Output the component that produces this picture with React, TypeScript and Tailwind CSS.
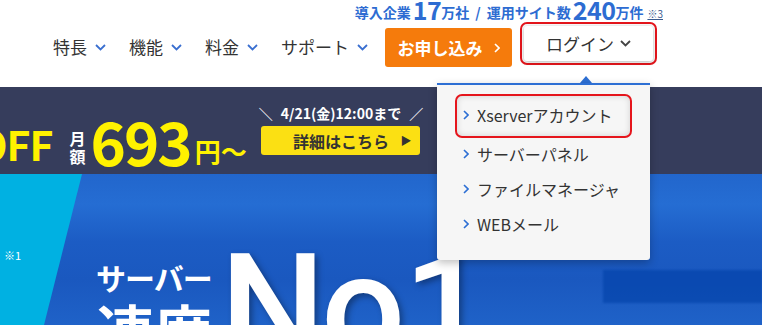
import React from "react";

const Chevron = ({ className = "" }: { className?: string }) => (
  <svg width="11" height="7" viewBox="0 0 11 7" className={className}>
    <polyline points="1,1 5.5,5.5 10,1" fill="none" stroke="currentColor" strokeWidth="1.8" />
  </svg>
);

const RightArrow = ({ className = "" }: { className?: string }) => (
  <svg width="6" height="10" viewBox="0 0 6 10" className={className}>
    <polyline points="1,1 5,5 1,9" fill="none" stroke="currentColor" strokeWidth="1.6" />
  </svg>
);

const navItems = ["特長", "機能", "料金", "サポート"];
const menuItems = ["サーバーパネル", "ファイルマネージャ", "WEBメール"];

export default function App() {
  return (
    <div
      className="relative w-[762px] h-[325px] overflow-hidden bg-white"
      style={{ fontFamily: '"Noto Sans CJK JP", "Noto Sans", sans-serif' }}
    >
      {/* header */}
      <header className="h-[87px] bg-white">
        <div className="flex items-end justify-end pr-[99px] h-[22px] pb-[3px] text-[#2d6cd2] font-bold leading-none">
          <span className="text-[14px]">導入企業</span>
          <span className="text-[25px] ml-[2px] tracking-[-0.5px] leading-[20px]">17</span>
          <span className="text-[14px]">万社</span>
          <span className="text-[14px] mx-[6px]">/</span>
          <span className="text-[14px]">運用サイト数</span>
          <span className="text-[25px] ml-[2px] tracking-[-0.5px] leading-[20px]">240</span>
          <span className="text-[14px]">万件</span>
          <span className="text-[10px] ml-[4px] underline text-[#3a5b8f] font-normal">※3</span>
        </div>
        <div className="flex items-start pl-[53px]">
          <nav className="flex items-center gap-[23px] h-[50px] text-[17px] text-[#333]">
            {navItems.map((n) => (
              <div key={n} className="flex items-center gap-[8px]">
                <span>{n}</span>
                <Chevron className="text-[#3a6fd0]" />
              </div>
            ))}
          </nav>
          <a className="ml-[17px] mt-[6px] flex items-center justify-center gap-[11px] w-[127px] h-[39px] rounded-[3px] bg-[#f57b0c] text-white font-bold text-[17px]">
            お申し込み
            <RightArrow />
          </a>
          <div className="ml-[8px] w-[137px] h-[43px] rounded-[7px] border-2 border-[#e5151c] p-[2px]">
            <div className="flex items-center justify-center gap-[6px] h-full rounded-[3px] bg-white shadow-[0_1px_4px_rgba(0,0,0,0.3)] text-[17px] text-[#333]">
              ログイン
              <Chevron className="text-[#444]" />
            </div>
          </div>
        </div>
      </header>

      {/* campaign banner */}
      <div className="h-[87px] bg-[#363d5c] flex items-center">
        <div className="flex items-end -ml-[24px] mt-[12px] text-[#fff200] font-bold leading-none">
          <span className="text-[41px] tracking-[-1px]">OFF</span>
          <span className="ml-[17px] flex flex-col text-white text-[16px] leading-[18px] mb-[-1px]">
            <span>月</span>
            <span>額</span>
          </span>
          <span className="ml-[5px] text-[60px] tracking-[-2px] mb-[-6px]">693</span>
          <span className="ml-[4px] text-[26px]">円〜</span>
        </div>
        <div className="ml-[12px] flex flex-col items-center">
          <div className="flex items-center gap-[8px] text-white font-bold text-[14px] leading-none">
            <span>＼</span>
            <span>4/21(金)12:00まで</span>
            <span>／</span>
          </div>
          <div className="mt-[6px] relative flex items-center justify-center w-[159px] h-[29px] rounded-[3px] bg-[#fbe013] text-[#333] font-bold text-[16px]">
            詳細はこちら
            <span className="absolute right-[9px] text-[11px]">▶</span>
          </div>
        </div>
      </div>

      {/* hero */}
      <div className="relative h-[151px] overflow-hidden bg-[linear-gradient(180deg,#2266cc_0%,#256dd3_20%,#1c5cc4_45%,#1a58bf_70%,#1f62c8_100%)]">
        <div className="absolute inset-0 bg-[#00b1e2] [clip-path:polygon(0_0,82px_0,44px_100%,0_100%)]" />
        <div className="absolute left-[603px] top-[96px] w-[159px] h-[33px] bg-[#0040a8] opacity-60 blur-[1px]" />
        <div className="relative flex pl-[4px] pt-[76px] text-white">
          <span className="text-[11px] leading-none">※1</span>
          <div className="ml-[75px] flex flex-col font-bold leading-none pt-[12px]">
            <span className="text-[30px] tracking-[-1px]">サーバー</span>
            <span className="text-[58px] mt-[8px]">速度</span>
          </div>
          <div
            className="ml-[8px] -mt-[15px] flex items-baseline text-[148px] leading-none font-medium drop-shadow-[3px_3px_3px_rgba(0,0,0,0.35)]"
            style={{ fontFamily: "Roboto, sans-serif" }}
          >
            <span className="tracking-[-4px]">No</span>
            <span className="text-[30px] -mr-[6px]">.</span>
            <span>1</span>
          </div>
        </div>
      </div>

      {/* login dropdown */}
      <div className="absolute left-[580px] top-[76px] w-0 h-0 border-l-[6px] border-r-[6px] border-b-[7px] border-l-transparent border-r-transparent border-b-[#2d6fd4]" />
      <div className="absolute left-[437px] top-[83px] w-[213px] h-[177px] bg-[#f6f6f6] border-t-2 border-[#2d6fd4] rounded-b-[3px] shadow-[0_3px_8px_rgba(0,0,0,0.25)] px-[18px] pt-[9px] text-[16px] text-[#333]">
        <div className="flex items-center h-[44px] pb-[2px] rounded-[7px] border-2 border-[#e5151c] pl-[6px] shadow-[inset_0_0_6px_rgba(0,0,0,0.15)]">
          <RightArrow className="text-[#2d6fd4] mr-[8px]" />
          Xserverアカウント
        </div>
        {menuItems.map((m) => (
          <div key={m} className="flex items-center h-[35px] pl-[8px] pb-[3px]">
            <RightArrow className="text-[#2d6fd4] mr-[8px]" />
            {m}
          </div>
        ))}
      </div>
    </div>
  );
}
